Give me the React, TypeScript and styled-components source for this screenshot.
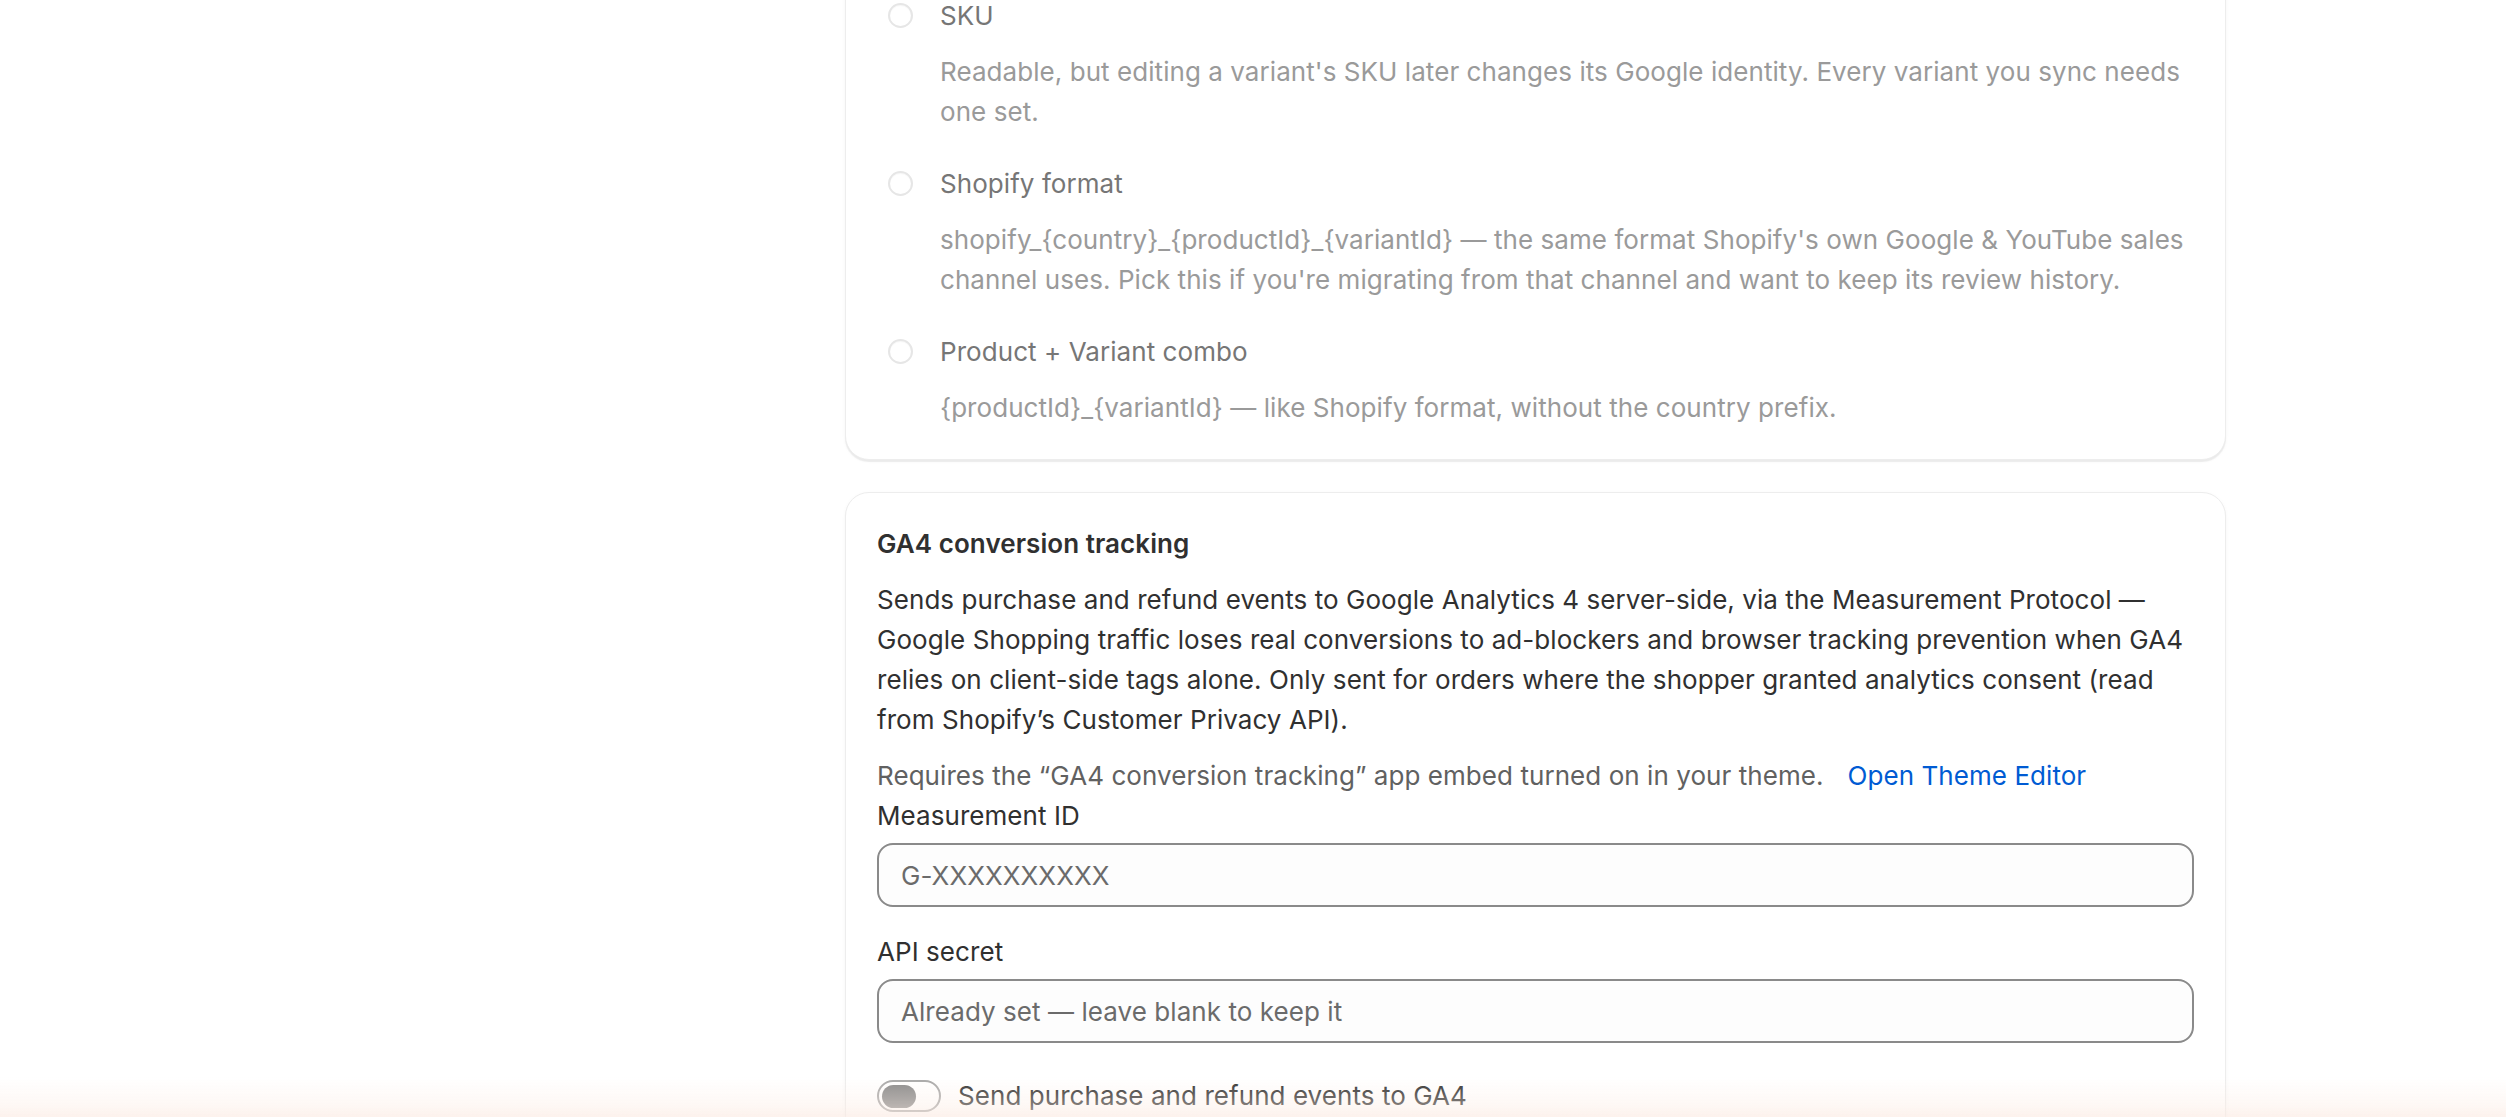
import React from "react";
import styled, { createGlobalStyle } from "styled-components";

const Global = createGlobalStyle`
  html, body { margin: 0; padding: 0; background: #ffffff; }
  body {
    font-family: Inter, "Noto Sans", "Liberation Sans", sans-serif;
    font-size: 26px;
    line-height: 40px;
    letter-spacing: 0.06px;
    color: #303030;
    overflow: hidden;
  }
  * { box-sizing: border-box; }
`;

const Page = styled.main`
  display: grid;
  grid-template-columns: 845px 1381px 1fr;
  height: 1117px;
  overflow: hidden;
`;

const Column = styled.div`
  grid-column: 2;
  display: flex;
  flex-direction: column;
  gap: 32px;
  margin-top: -36px;
`;

const Card = styled.section`
  background: #ffffff;
  border-radius: 24px;
  border: 1px solid #ededed;
  box-shadow: 0 2px 1px rgba(26, 26, 26, 0.07), 0 1px 4px rgba(26, 26, 26, 0.03);
  padding: 31px 31px;
  display: flex;
  flex-direction: column;
`;

const Options = styled.div`
  display: flex;
  flex-direction: column;
  gap: 32px;
`;

const Option = styled.div`
  display: grid;
  grid-template-columns: 63px 1fr;
  row-gap: 16px;
`;

const RadioCell = styled.div`
  display: flex;
  align-items: center;
  height: 40px;
  padding-left: 11px;
`;

const RadioCircle = styled.span`
  width: 25px;
  height: 25px;
  margin-top: -2px;
  border-radius: 50%;
  border: 2px solid #e6e6e6;
  background: #ffffff;
  box-shadow: inset 0 1px 1px rgba(0, 0, 0, 0.03);
`;

const OptionLabel = styled.div`
  color: #767676;
`;

const OptionHelp = styled.div`
  grid-column: 2;
  color: #9a9a9a;
`;

const Heading = styled.h2`
  margin: 0;
  font-size: 26px;
  line-height: 40px;
  font-weight: 600;
  color: #303030;
`;

const Paragraph = styled.p`
  margin: 16px 0 0;
  color: #303030;
`;

const NoteRow = styled.div`
  margin-top: 16px;
  display: flex;
  align-items: baseline;
  gap: 24px;
  color: #616161;
`;

const Link = styled.a`
  color: #005bd3;
  text-decoration: none;
  cursor: pointer;
`;

const Field = styled.div<{ $gapTop: number }>`
  display: flex;
  flex-direction: column;
  gap: 7px;
  margin-top: ${(p) => p.$gapTop}px;
`;

const FieldLabel = styled.label`
  color: #303030;
`;

const Input = styled.input`
  height: 64px;
  width: 100%;
  border: 2px solid #8a8a8a;
  border-radius: 16px;
  background: #fdfdfd;
  padding: 0 22px;
  font-family: Inter, "Noto Sans", "Liberation Sans", sans-serif;
  font-size: 26px;
  letter-spacing: 0.06px;
  color: #303030;
  outline: none;
  &::placeholder {
    color: #6b6b6b;
  }
`;

const ToggleRow = styled.label`
  margin-top: 33px;
  display: flex;
  align-items: center;
  gap: 17px;
  color: #303030;
  height: 40px;
`;

const Track = styled.span`
  width: 64px;
  height: 32px;
  border-radius: 16px;
  border: 2px solid #a8a8a8;
  background: #ffffff;
  display: flex;
  align-items: center;
  padding-left: 3px;
  flex-shrink: 0;
`;

const Knob = styled.span`
  width: 34px;
  height: 23px;
  border-radius: 12px;
  background: #8a8a8a;
`;

const BottomGlow = styled.div`
  position: fixed;
  left: 0;
  right: 0;
  bottom: 0;
  height: 40px;
  pointer-events: none;
  background: linear-gradient(
    to bottom,
    rgba(255, 246, 240, 0) 0%,
    rgba(252, 238, 230, 0.4) 70%,
    rgba(251, 234, 226, 0.65) 100%
  );
`;

const options = [
  {
    label: "SKU",
    help:
      "Readable, but editing a variant's SKU later changes its Google identity. Every variant you sync needs one set.",
  },
  {
    label: "Shopify format",
    help:
      "shopify_{country}_{productId}_{variantId} — the same format Shopify's own Google & YouTube sales channel uses. Pick this if you're migrating from that channel and want to keep its review history.",
  },
  {
    label: "Product + Variant combo",
    help: "{productId}_{variantId} — like Shopify format, without the country prefix.",
  },
];

export default function App() {
  return (
    <>
      <Global />
      <Page>
        <Column>
          <Card>
            <Options>
              {options.map((o) => (
                <Option key={o.label}>
                  <RadioCell>
                    <RadioCircle />
                  </RadioCell>
                  <OptionLabel>{o.label}</OptionLabel>
                  <OptionHelp>{o.help}</OptionHelp>
                </Option>
              ))}
            </Options>
          </Card>
          <Card>
            <Heading>GA4 conversion tracking</Heading>
            <Paragraph>
              Sends purchase and refund events to Google Analytics 4 server-side, via the
              Measurement Protocol — Google Shopping traffic loses real conversions to
              ad-blockers and browser tracking prevention when GA4 relies on client-side tags
              alone. Only sent for orders where the shopper granted analytics consent (read from
              Shopify’s Customer Privacy API).
            </Paragraph>
            <NoteRow>
              <span>Requires the “GA4 conversion tracking” app embed turned on in your theme.</span>
              <Link>Open Theme Editor</Link>
            </NoteRow>
            <Field $gapTop={0}>
              <FieldLabel>Measurement ID</FieldLabel>
              <Input placeholder="G-XXXXXXXXXX" />
            </Field>
            <Field $gapTop={25}>
              <FieldLabel>API secret</FieldLabel>
              <Input placeholder="Already set — leave blank to keep it" />
            </Field>
            <ToggleRow>
              <Track>
                <Knob />
              </Track>
              <span>Send purchase and refund events to GA4</span>
            </ToggleRow>
          </Card>
        </Column>
      </Page>
      <BottomGlow />
    </>
  );
}
